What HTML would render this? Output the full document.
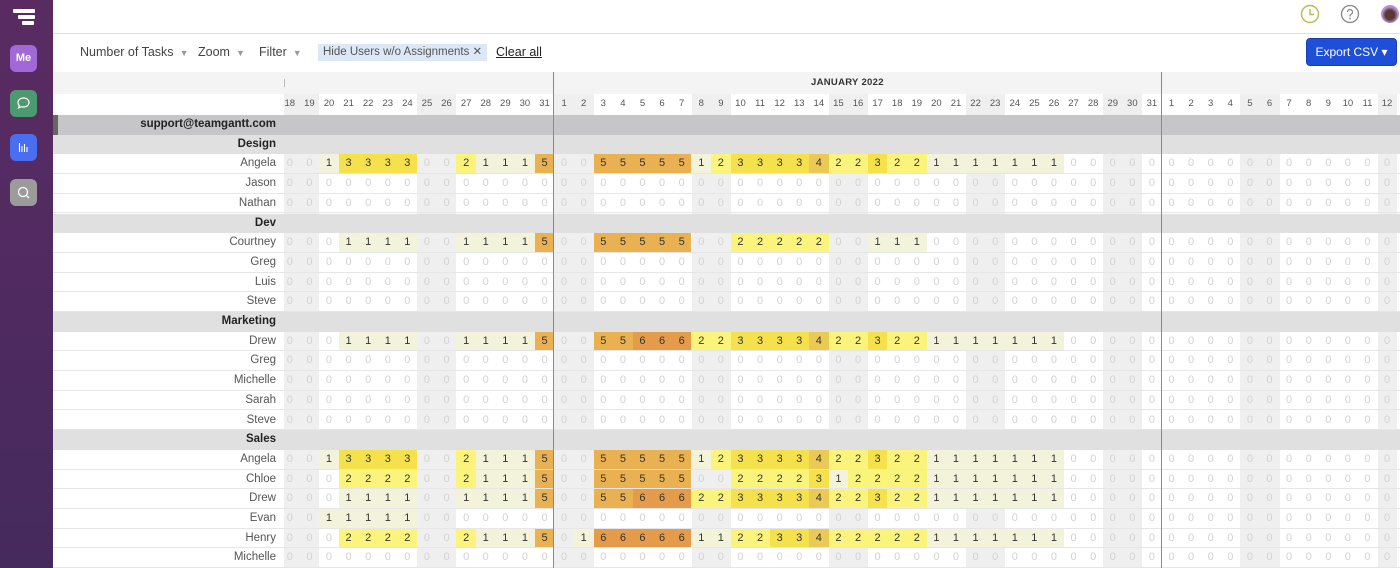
<!DOCTYPE html>
<html><head><meta charset="utf-8">
<style>
*{margin:0;padding:0}
body{width:1400px;height:568px;overflow:hidden;position:relative;background:#fff;font-family:"Liberation Sans",sans-serif;color:#444}
.sb{position:absolute;left:0;top:0;width:53px;height:568px;background:linear-gradient(#5a2b63,#452a5e)}
.ic{position:absolute;left:10px;width:27px;height:27px;border-radius:6px}
.top{position:absolute;left:53px;top:0;width:1347px;height:33px;border-bottom:1px solid #e2e2e2}
.tb{position:absolute;top:45px;font-size:12.5px;color:#444;white-space:nowrap}
.tb span{color:#999;font-size:9px;margin-left:6px}
.mrow{position:absolute;left:53px;top:72px;width:1347px;height:22px;background:#f4f4f5}
.drow{position:absolute;left:53px;top:94px;width:1347px;height:21px}
.wk{position:absolute;top:94px;height:474px;width:19.6px;background:#efeff0}
.r{position:absolute;left:53px;width:1347px;height:19.7px;display:flex;box-sizing:border-box;border-bottom:1px solid #e6e6e6;font-size:11px}
.n{width:231px;flex:0 0 231px;text-align:right;padding-right:8px;box-sizing:border-box;line-height:19px;color:#555;font-size:11.5px;background:#fff}
.g{width:1116px;overflow:hidden}
.g>div{display:flex;margin-left:-4px}
.g i,.g b{flex:0 0 19.6px;width:19.6px;text-align:center;line-height:18.7px;font-style:normal;font-weight:normal}
.g i{color:#d2d2d2}
.g b{color:#333}
.a1{background:#f3f3dc}.a2{background:#faf47c}.a3{background:#f4e14b}.a4{background:#ebc955}.a5{background:#e9b152}.a6{background:#e59c4a}
.grp{background:#e0e0e0;border-bottom:none}
.grp .n{background:#e0e0e0;font-weight:bold;color:#222}
.sup{background:#c6c6c8;border-bottom:none;border-left:5px solid #666;left:53px}
.sup .n{background:#c6c6c8;font-weight:bold;color:#222;width:226px;flex-basis:226px}
.dh{display:flex;margin-left:-4px}
.dh i{flex:0 0 19.6px;width:19.6px;text-align:center;font-style:normal;font-size:9.5px;color:#555;line-height:20px}
.vl{position:absolute;top:72px;width:1px;height:496px;background:#8a8a8a;z-index:5}
</style></head><body>
<div class="sb">
 <div style="position:absolute;left:13px;top:9px;width:22px;height:3.5px;background:#fff;border-radius:1px"></div>
 <div style="position:absolute;left:18px;top:15px;width:17px;height:3.5px;background:#fff;border-radius:1px"></div>
 <div style="position:absolute;left:22px;top:21px;width:12px;height:3.5px;background:#fff;border-radius:1px"></div>
 <div class="ic" style="top:45px;background:#a368d8;color:#fff;font-size:11px;font-weight:bold;text-align:center;line-height:27px">Me</div>
 <div class="ic" style="top:90px;background:#4c9a6d"><svg width="27" height="27" viewBox="0 0 27 27"><path d="M13.5 8c3.3 0 5.5 2 5.5 4.5S16.8 17 13.5 17c-.8 0-1.5-.1-2.2-.3L8.5 18l.8-2.4C8.5 14.8 8 13.7 8 12.5 8 10 10.2 8 13.5 8z" fill="none" stroke="#fff" stroke-width="1.2"/></svg></div>
 <div class="ic" style="top:134px;background:#4a6ef0"><svg width="27" height="27" viewBox="0 0 27 27"><path d="M9.5 9v9M12 12v6M14.5 10v8M17 13v5" stroke="#fff" stroke-width="1.1"/></svg></div>
 <div class="ic" style="top:179px;background:#9b9b9b"><svg width="27" height="27" viewBox="0 0 27 27"><circle cx="13" cy="13" r="4.5" fill="none" stroke="#fff" stroke-width="1.3"/><path d="M16.3 16.3l2.7 2.7" stroke="#fff" stroke-width="1.3"/></svg></div>
</div>
<div class="top">
 <svg style="position:absolute;left:1247px;top:4px" width="20" height="20" viewBox="0 0 20 20"><circle cx="10" cy="10" r="8.5" fill="none" stroke="#b3bd52" stroke-width="1.4"/><path d="M10 5v5.5h4" fill="none" stroke="#b3bd52" stroke-width="1.4"/></svg>
 <svg style="position:absolute;left:1287px;top:4px" width="20" height="20" viewBox="0 0 20 20"><circle cx="10" cy="10" r="8.5" fill="none" stroke="#888" stroke-width="1.3"/><path d="M7.5 8a2.5 2.5 0 1 1 3.5 2.3c-.7.3-1 .8-1 1.5v.7" fill="none" stroke="#888" stroke-width="1.3"/><circle cx="10" cy="14.5" r=".9" fill="#888"/></svg>
 <div style="position:absolute;left:1328px;top:5px;width:18px;height:18px;border-radius:50%;background:radial-gradient(circle at 50% 55%,#5a3a30 0 35%,#b98fd8 60%)"></div>
</div>
<div class="tb" style="left:80px">Number of Tasks<span>▼</span></div>
<div class="tb" style="left:198px">Zoom<span>▼</span></div>
<div class="tb" style="left:259px">Filter<span>▼</span></div>
<div style="position:absolute;left:318px;top:44px;width:169px;height:17px;background:#dde8f6;font-size:11.5px;color:#555;line-height:17px;padding-left:5px;box-sizing:border-box;white-space:nowrap;overflow:hidden">Hide Users w/o Assignments ✕</div>
<div class="tb" style="left:496px;color:#222;text-decoration:underline">Clear all</div>
<div style="position:absolute;left:1306px;top:38px;width:91px;height:28px;background:#1f4fd9;border-radius:4px;color:#fff;font-size:12px;line-height:26px;text-align:center;border:1px solid #1a3fb0;box-sizing:border-box;white-space:nowrap">Export CSV ▾</div>

<div class="mrow"><div style="position:absolute;left:758px;top:0;line-height:22px;font-size:9.5px;font-weight:bold;color:#333;letter-spacing:.3px">JANUARY 2022</div></div>
<div class="wk" style="left:284px;width:15.6px"></div><div class="wk" style="left:299.2px"></div>
<div class="wk" style="left:417px"></div><div class="wk" style="left:436.6px"></div>
<div class="wk" style="left:554.4px"></div><div class="wk" style="left:574px"></div>
<div class="wk" style="left:691.6px"></div><div class="wk" style="left:711.2px"></div>
<div class="wk" style="left:828.8px"></div><div class="wk" style="left:848.4px"></div>
<div class="wk" style="left:966px"></div><div class="wk" style="left:985.6px"></div>
<div class="wk" style="left:1103.2px"></div><div class="wk" style="left:1122.8px"></div>
<div class="wk" style="left:1240.4px"></div><div class="wk" style="left:1260px"></div>
<div class="wk" style="left:1377.6px"></div>
<div class="drow"><div style="position:absolute;left:231px;width:1116px;overflow:hidden"><div class="dh"><i>18</i><i>19</i><i>20</i><i>21</i><i>22</i><i>23</i><i>24</i><i>25</i><i>26</i><i>27</i><i>28</i><i>29</i><i>30</i><i>31</i><i>1</i><i>2</i><i>3</i><i>4</i><i>5</i><i>6</i><i>7</i><i>8</i><i>9</i><i>10</i><i>11</i><i>12</i><i>13</i><i>14</i><i>15</i><i>16</i><i>17</i><i>18</i><i>19</i><i>20</i><i>21</i><i>22</i><i>23</i><i>24</i><i>25</i><i>26</i><i>27</i><i>28</i><i>29</i><i>30</i><i>31</i><i>1</i><i>2</i><i>3</i><i>4</i><i>5</i><i>6</i><i>7</i><i>8</i><i>9</i><i>10</i><i>11</i><i>12</i></div></div></div>
<div style="position:absolute;left:284px;top:79px;width:1px;height:8px;background:#bbb"></div>
<div class="vl" style="left:553px"></div>
<div class="vl" style="left:1161px"></div>

<div class="r sup" style="top:115px"><div class="n">support@teamgantt.com</div></div>
<div class="r grp" style="top:134.7px"><div class="n">Design</div></div>
<div class="r" style="top:154.4px"><div class="n">Angela</div><div class="g"><div><i>0</i><i>0</i><b class=a1>1</b><b class=a3>3</b><b class=a3>3</b><b class=a3>3</b><b class=a3>3</b><i>0</i><i>0</i><b class=a2>2</b><b class=a1>1</b><b class=a1>1</b><b class=a1>1</b><b class=a5>5</b><i>0</i><i>0</i><b class=a5>5</b><b class=a5>5</b><b class=a5>5</b><b class=a5>5</b><b class=a5>5</b><b class=a1>1</b><b class=a2>2</b><b class=a3>3</b><b class=a3>3</b><b class=a3>3</b><b class=a3>3</b><b class=a4>4</b><b class=a2>2</b><b class=a2>2</b><b class=a3>3</b><b class=a2>2</b><b class=a2>2</b><b class=a1>1</b><b class=a1>1</b><b class=a1>1</b><b class=a1>1</b><b class=a1>1</b><b class=a1>1</b><b class=a1>1</b><i>0</i><i>0</i><i>0</i><i>0</i><i>0</i><i>0</i><i>0</i><i>0</i><i>0</i><i>0</i><i>0</i><i>0</i><i>0</i><i>0</i><i>0</i><i>0</i><i>0</i></div></div></div>
<div class="r" style="top:174.1px"><div class="n">Jason</div><div class="g"><div><i>0</i><i>0</i><i>0</i><i>0</i><i>0</i><i>0</i><i>0</i><i>0</i><i>0</i><i>0</i><i>0</i><i>0</i><i>0</i><i>0</i><i>0</i><i>0</i><i>0</i><i>0</i><i>0</i><i>0</i><i>0</i><i>0</i><i>0</i><i>0</i><i>0</i><i>0</i><i>0</i><i>0</i><i>0</i><i>0</i><i>0</i><i>0</i><i>0</i><i>0</i><i>0</i><i>0</i><i>0</i><i>0</i><i>0</i><i>0</i><i>0</i><i>0</i><i>0</i><i>0</i><i>0</i><i>0</i><i>0</i><i>0</i><i>0</i><i>0</i><i>0</i><i>0</i><i>0</i><i>0</i><i>0</i><i>0</i><i>0</i></div></div></div>
<div class="r" style="top:193.8px"><div class="n">Nathan</div><div class="g"><div><i>0</i><i>0</i><i>0</i><i>0</i><i>0</i><i>0</i><i>0</i><i>0</i><i>0</i><i>0</i><i>0</i><i>0</i><i>0</i><i>0</i><i>0</i><i>0</i><i>0</i><i>0</i><i>0</i><i>0</i><i>0</i><i>0</i><i>0</i><i>0</i><i>0</i><i>0</i><i>0</i><i>0</i><i>0</i><i>0</i><i>0</i><i>0</i><i>0</i><i>0</i><i>0</i><i>0</i><i>0</i><i>0</i><i>0</i><i>0</i><i>0</i><i>0</i><i>0</i><i>0</i><i>0</i><i>0</i><i>0</i><i>0</i><i>0</i><i>0</i><i>0</i><i>0</i><i>0</i><i>0</i><i>0</i><i>0</i><i>0</i></div></div></div>
<div class="r grp" style="top:213.5px"><div class="n">Dev</div></div>
<div class="r" style="top:233.2px"><div class="n">Courtney</div><div class="g"><div><i>0</i><i>0</i><i>0</i><b class=a1>1</b><b class=a1>1</b><b class=a1>1</b><b class=a1>1</b><i>0</i><i>0</i><b class=a1>1</b><b class=a1>1</b><b class=a1>1</b><b class=a1>1</b><b class=a5>5</b><i>0</i><i>0</i><b class=a5>5</b><b class=a5>5</b><b class=a5>5</b><b class=a5>5</b><b class=a5>5</b><i>0</i><i>0</i><b class=a2>2</b><b class=a2>2</b><b class=a2>2</b><b class=a2>2</b><b class=a2>2</b><i>0</i><i>0</i><b class=a1>1</b><b class=a1>1</b><b class=a1>1</b><i>0</i><i>0</i><i>0</i><i>0</i><i>0</i><i>0</i><i>0</i><i>0</i><i>0</i><i>0</i><i>0</i><i>0</i><i>0</i><i>0</i><i>0</i><i>0</i><i>0</i><i>0</i><i>0</i><i>0</i><i>0</i><i>0</i><i>0</i><i>0</i></div></div></div>
<div class="r" style="top:252.9px"><div class="n">Greg</div><div class="g"><div><i>0</i><i>0</i><i>0</i><i>0</i><i>0</i><i>0</i><i>0</i><i>0</i><i>0</i><i>0</i><i>0</i><i>0</i><i>0</i><i>0</i><i>0</i><i>0</i><i>0</i><i>0</i><i>0</i><i>0</i><i>0</i><i>0</i><i>0</i><i>0</i><i>0</i><i>0</i><i>0</i><i>0</i><i>0</i><i>0</i><i>0</i><i>0</i><i>0</i><i>0</i><i>0</i><i>0</i><i>0</i><i>0</i><i>0</i><i>0</i><i>0</i><i>0</i><i>0</i><i>0</i><i>0</i><i>0</i><i>0</i><i>0</i><i>0</i><i>0</i><i>0</i><i>0</i><i>0</i><i>0</i><i>0</i><i>0</i><i>0</i></div></div></div>
<div class="r" style="top:272.6px"><div class="n">Luis</div><div class="g"><div><i>0</i><i>0</i><i>0</i><i>0</i><i>0</i><i>0</i><i>0</i><i>0</i><i>0</i><i>0</i><i>0</i><i>0</i><i>0</i><i>0</i><i>0</i><i>0</i><i>0</i><i>0</i><i>0</i><i>0</i><i>0</i><i>0</i><i>0</i><i>0</i><i>0</i><i>0</i><i>0</i><i>0</i><i>0</i><i>0</i><i>0</i><i>0</i><i>0</i><i>0</i><i>0</i><i>0</i><i>0</i><i>0</i><i>0</i><i>0</i><i>0</i><i>0</i><i>0</i><i>0</i><i>0</i><i>0</i><i>0</i><i>0</i><i>0</i><i>0</i><i>0</i><i>0</i><i>0</i><i>0</i><i>0</i><i>0</i><i>0</i></div></div></div>
<div class="r" style="top:292.3px"><div class="n">Steve</div><div class="g"><div><i>0</i><i>0</i><i>0</i><i>0</i><i>0</i><i>0</i><i>0</i><i>0</i><i>0</i><i>0</i><i>0</i><i>0</i><i>0</i><i>0</i><i>0</i><i>0</i><i>0</i><i>0</i><i>0</i><i>0</i><i>0</i><i>0</i><i>0</i><i>0</i><i>0</i><i>0</i><i>0</i><i>0</i><i>0</i><i>0</i><i>0</i><i>0</i><i>0</i><i>0</i><i>0</i><i>0</i><i>0</i><i>0</i><i>0</i><i>0</i><i>0</i><i>0</i><i>0</i><i>0</i><i>0</i><i>0</i><i>0</i><i>0</i><i>0</i><i>0</i><i>0</i><i>0</i><i>0</i><i>0</i><i>0</i><i>0</i><i>0</i></div></div></div>
<div class="r grp" style="top:312px"><div class="n">Marketing</div></div>
<div class="r" style="top:331.7px"><div class="n">Drew</div><div class="g"><div><i>0</i><i>0</i><i>0</i><b class=a1>1</b><b class=a1>1</b><b class=a1>1</b><b class=a1>1</b><i>0</i><i>0</i><b class=a1>1</b><b class=a1>1</b><b class=a1>1</b><b class=a1>1</b><b class=a5>5</b><i>0</i><i>0</i><b class=a5>5</b><b class=a5>5</b><b class=a6>6</b><b class=a6>6</b><b class=a6>6</b><b class=a2>2</b><b class=a2>2</b><b class=a3>3</b><b class=a3>3</b><b class=a3>3</b><b class=a3>3</b><b class=a4>4</b><b class=a2>2</b><b class=a2>2</b><b class=a3>3</b><b class=a2>2</b><b class=a2>2</b><b class=a1>1</b><b class=a1>1</b><b class=a1>1</b><b class=a1>1</b><b class=a1>1</b><b class=a1>1</b><b class=a1>1</b><i>0</i><i>0</i><i>0</i><i>0</i><i>0</i><i>0</i><i>0</i><i>0</i><i>0</i><i>0</i><i>0</i><i>0</i><i>0</i><i>0</i><i>0</i><i>0</i><i>0</i></div></div></div>
<div class="r" style="top:351.4px"><div class="n">Greg</div><div class="g"><div><i>0</i><i>0</i><i>0</i><i>0</i><i>0</i><i>0</i><i>0</i><i>0</i><i>0</i><i>0</i><i>0</i><i>0</i><i>0</i><i>0</i><i>0</i><i>0</i><i>0</i><i>0</i><i>0</i><i>0</i><i>0</i><i>0</i><i>0</i><i>0</i><i>0</i><i>0</i><i>0</i><i>0</i><i>0</i><i>0</i><i>0</i><i>0</i><i>0</i><i>0</i><i>0</i><i>0</i><i>0</i><i>0</i><i>0</i><i>0</i><i>0</i><i>0</i><i>0</i><i>0</i><i>0</i><i>0</i><i>0</i><i>0</i><i>0</i><i>0</i><i>0</i><i>0</i><i>0</i><i>0</i><i>0</i><i>0</i><i>0</i></div></div></div>
<div class="r" style="top:371.1px"><div class="n">Michelle</div><div class="g"><div><i>0</i><i>0</i><i>0</i><i>0</i><i>0</i><i>0</i><i>0</i><i>0</i><i>0</i><i>0</i><i>0</i><i>0</i><i>0</i><i>0</i><i>0</i><i>0</i><i>0</i><i>0</i><i>0</i><i>0</i><i>0</i><i>0</i><i>0</i><i>0</i><i>0</i><i>0</i><i>0</i><i>0</i><i>0</i><i>0</i><i>0</i><i>0</i><i>0</i><i>0</i><i>0</i><i>0</i><i>0</i><i>0</i><i>0</i><i>0</i><i>0</i><i>0</i><i>0</i><i>0</i><i>0</i><i>0</i><i>0</i><i>0</i><i>0</i><i>0</i><i>0</i><i>0</i><i>0</i><i>0</i><i>0</i><i>0</i><i>0</i></div></div></div>
<div class="r" style="top:390.8px"><div class="n">Sarah</div><div class="g"><div><i>0</i><i>0</i><i>0</i><i>0</i><i>0</i><i>0</i><i>0</i><i>0</i><i>0</i><i>0</i><i>0</i><i>0</i><i>0</i><i>0</i><i>0</i><i>0</i><i>0</i><i>0</i><i>0</i><i>0</i><i>0</i><i>0</i><i>0</i><i>0</i><i>0</i><i>0</i><i>0</i><i>0</i><i>0</i><i>0</i><i>0</i><i>0</i><i>0</i><i>0</i><i>0</i><i>0</i><i>0</i><i>0</i><i>0</i><i>0</i><i>0</i><i>0</i><i>0</i><i>0</i><i>0</i><i>0</i><i>0</i><i>0</i><i>0</i><i>0</i><i>0</i><i>0</i><i>0</i><i>0</i><i>0</i><i>0</i><i>0</i></div></div></div>
<div class="r" style="top:410.5px"><div class="n">Steve</div><div class="g"><div><i>0</i><i>0</i><i>0</i><i>0</i><i>0</i><i>0</i><i>0</i><i>0</i><i>0</i><i>0</i><i>0</i><i>0</i><i>0</i><i>0</i><i>0</i><i>0</i><i>0</i><i>0</i><i>0</i><i>0</i><i>0</i><i>0</i><i>0</i><i>0</i><i>0</i><i>0</i><i>0</i><i>0</i><i>0</i><i>0</i><i>0</i><i>0</i><i>0</i><i>0</i><i>0</i><i>0</i><i>0</i><i>0</i><i>0</i><i>0</i><i>0</i><i>0</i><i>0</i><i>0</i><i>0</i><i>0</i><i>0</i><i>0</i><i>0</i><i>0</i><i>0</i><i>0</i><i>0</i><i>0</i><i>0</i><i>0</i><i>0</i></div></div></div>
<div class="r grp" style="top:430.2px"><div class="n">Sales</div></div>
<div class="r" style="top:449.9px"><div class="n">Angela</div><div class="g"><div><i>0</i><i>0</i><b class=a1>1</b><b class=a3>3</b><b class=a3>3</b><b class=a3>3</b><b class=a3>3</b><i>0</i><i>0</i><b class=a2>2</b><b class=a1>1</b><b class=a1>1</b><b class=a1>1</b><b class=a5>5</b><i>0</i><i>0</i><b class=a5>5</b><b class=a5>5</b><b class=a5>5</b><b class=a5>5</b><b class=a5>5</b><b class=a1>1</b><b class=a2>2</b><b class=a3>3</b><b class=a3>3</b><b class=a3>3</b><b class=a3>3</b><b class=a4>4</b><b class=a2>2</b><b class=a2>2</b><b class=a3>3</b><b class=a2>2</b><b class=a2>2</b><b class=a1>1</b><b class=a1>1</b><b class=a1>1</b><b class=a1>1</b><b class=a1>1</b><b class=a1>1</b><b class=a1>1</b><i>0</i><i>0</i><i>0</i><i>0</i><i>0</i><i>0</i><i>0</i><i>0</i><i>0</i><i>0</i><i>0</i><i>0</i><i>0</i><i>0</i><i>0</i><i>0</i><i>0</i></div></div></div>
<div class="r" style="top:469.6px"><div class="n">Chloe</div><div class="g"><div><i>0</i><i>0</i><i>0</i><b class=a2>2</b><b class=a2>2</b><b class=a2>2</b><b class=a2>2</b><i>0</i><i>0</i><b class=a2>2</b><b class=a1>1</b><b class=a1>1</b><b class=a1>1</b><b class=a5>5</b><i>0</i><i>0</i><b class=a5>5</b><b class=a5>5</b><b class=a5>5</b><b class=a5>5</b><b class=a5>5</b><i>0</i><i>0</i><b class=a2>2</b><b class=a2>2</b><b class=a2>2</b><b class=a2>2</b><b class=a3>3</b><b class=a1>1</b><b class=a2>2</b><b class=a2>2</b><b class=a2>2</b><b class=a2>2</b><b class=a1>1</b><b class=a1>1</b><b class=a1>1</b><b class=a1>1</b><b class=a1>1</b><b class=a1>1</b><b class=a1>1</b><i>0</i><i>0</i><i>0</i><i>0</i><i>0</i><i>0</i><i>0</i><i>0</i><i>0</i><i>0</i><i>0</i><i>0</i><i>0</i><i>0</i><i>0</i><i>0</i><i>0</i></div></div></div>
<div class="r" style="top:489.3px"><div class="n">Drew</div><div class="g"><div><i>0</i><i>0</i><i>0</i><b class=a1>1</b><b class=a1>1</b><b class=a1>1</b><b class=a1>1</b><i>0</i><i>0</i><b class=a1>1</b><b class=a1>1</b><b class=a1>1</b><b class=a1>1</b><b class=a5>5</b><i>0</i><i>0</i><b class=a5>5</b><b class=a5>5</b><b class=a6>6</b><b class=a6>6</b><b class=a6>6</b><b class=a2>2</b><b class=a2>2</b><b class=a3>3</b><b class=a3>3</b><b class=a3>3</b><b class=a3>3</b><b class=a4>4</b><b class=a2>2</b><b class=a2>2</b><b class=a3>3</b><b class=a2>2</b><b class=a2>2</b><b class=a1>1</b><b class=a1>1</b><b class=a1>1</b><b class=a1>1</b><b class=a1>1</b><b class=a1>1</b><b class=a1>1</b><i>0</i><i>0</i><i>0</i><i>0</i><i>0</i><i>0</i><i>0</i><i>0</i><i>0</i><i>0</i><i>0</i><i>0</i><i>0</i><i>0</i><i>0</i><i>0</i><i>0</i></div></div></div>
<div class="r" style="top:509px"><div class="n">Evan</div><div class="g"><div><i>0</i><i>0</i><b class=a1>1</b><b class=a1>1</b><b class=a1>1</b><b class=a1>1</b><b class=a1>1</b><i>0</i><i>0</i><i>0</i><i>0</i><i>0</i><i>0</i><i>0</i><i>0</i><i>0</i><i>0</i><i>0</i><i>0</i><i>0</i><i>0</i><i>0</i><i>0</i><i>0</i><i>0</i><i>0</i><i>0</i><i>0</i><i>0</i><i>0</i><i>0</i><i>0</i><i>0</i><i>0</i><i>0</i><i>0</i><i>0</i><i>0</i><i>0</i><i>0</i><i>0</i><i>0</i><i>0</i><i>0</i><i>0</i><i>0</i><i>0</i><i>0</i><i>0</i><i>0</i><i>0</i><i>0</i><i>0</i><i>0</i><i>0</i><i>0</i><i>0</i></div></div></div>
<div class="r" style="top:528.7px"><div class="n">Henry</div><div class="g"><div><i>0</i><i>0</i><i>0</i><b class=a2>2</b><b class=a2>2</b><b class=a2>2</b><b class=a2>2</b><i>0</i><i>0</i><b class=a2>2</b><b class=a1>1</b><b class=a1>1</b><b class=a1>1</b><b class=a5>5</b><i>0</i><b class=a1>1</b><b class=a6>6</b><b class=a6>6</b><b class=a6>6</b><b class=a6>6</b><b class=a6>6</b><b class=a1>1</b><b class=a1>1</b><b class=a2>2</b><b class=a2>2</b><b class=a3>3</b><b class=a3>3</b><b class=a4>4</b><b class=a2>2</b><b class=a2>2</b><b class=a2>2</b><b class=a2>2</b><b class=a2>2</b><b class=a1>1</b><b class=a1>1</b><b class=a1>1</b><b class=a1>1</b><b class=a1>1</b><b class=a1>1</b><b class=a1>1</b><i>0</i><i>0</i><i>0</i><i>0</i><i>0</i><i>0</i><i>0</i><i>0</i><i>0</i><i>0</i><i>0</i><i>0</i><i>0</i><i>0</i><i>0</i><i>0</i><i>0</i></div></div></div>
<div class="r" style="top:548.4px"><div class="n">Michelle</div><div class="g"><div><i>0</i><i>0</i><i>0</i><i>0</i><i>0</i><i>0</i><i>0</i><i>0</i><i>0</i><i>0</i><i>0</i><i>0</i><i>0</i><i>0</i><i>0</i><i>0</i><i>0</i><i>0</i><i>0</i><i>0</i><i>0</i><i>0</i><i>0</i><i>0</i><i>0</i><i>0</i><i>0</i><i>0</i><i>0</i><i>0</i><i>0</i><i>0</i><i>0</i><i>0</i><i>0</i><i>0</i><i>0</i><i>0</i><i>0</i><i>0</i><i>0</i><i>0</i><i>0</i><i>0</i><i>0</i><i>0</i><i>0</i><i>0</i><i>0</i><i>0</i><i>0</i><i>0</i><i>0</i><i>0</i><i>0</i><i>0</i><i>0</i></div></div></div>
</body></html>
